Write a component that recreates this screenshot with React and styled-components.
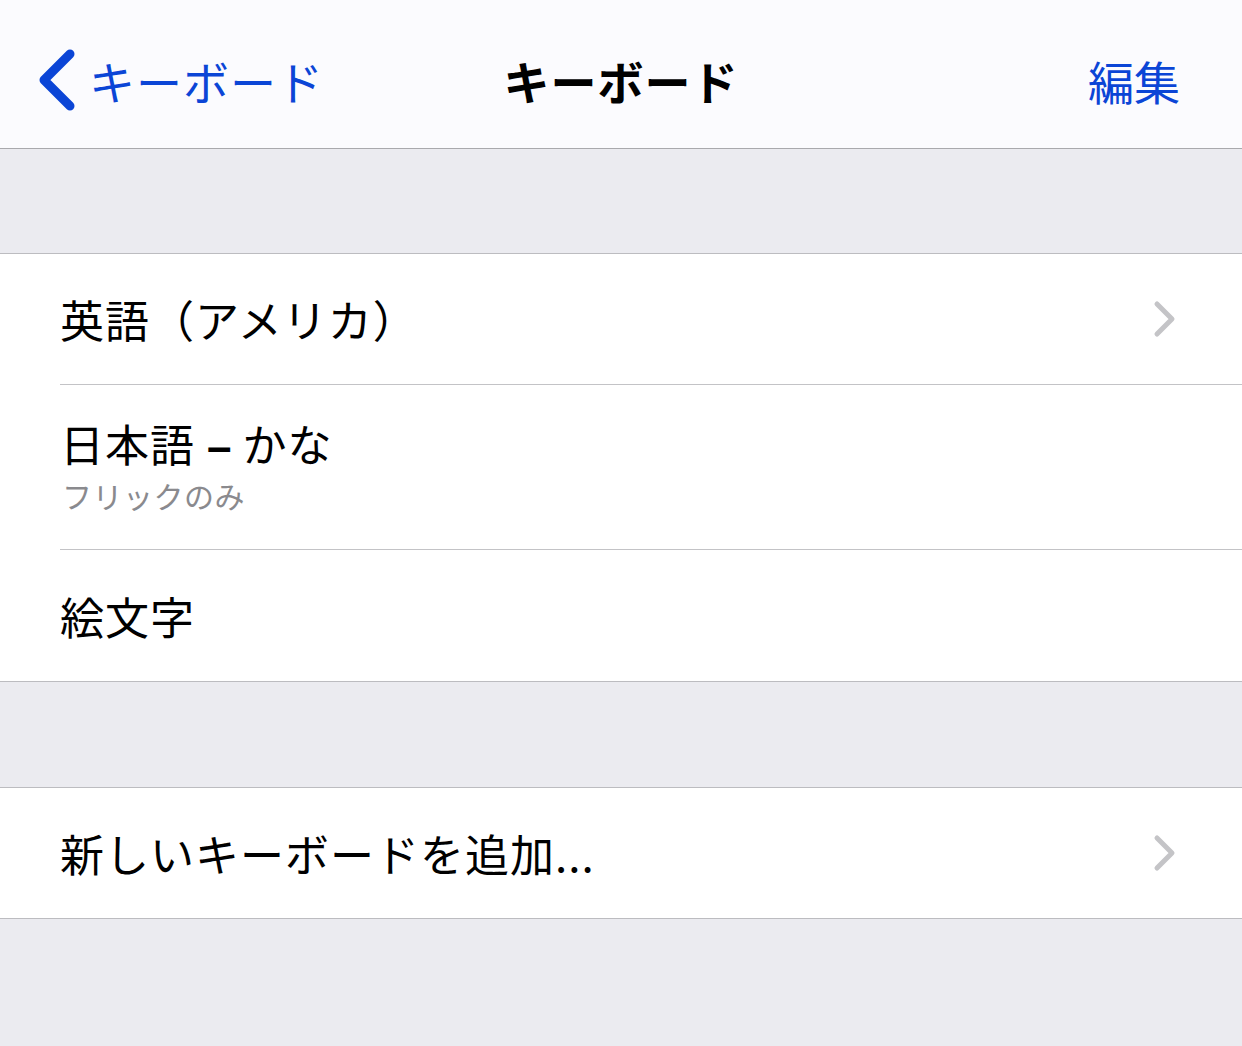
import React from "react";
import styled, { createGlobalStyle } from "styled-components";

const Global = createGlobalStyle`
  html, body { margin: 0; padding: 0; background: #ebebf0; }
  body { font-family: "Noto Sans CJK JP", "Noto Sans", sans-serif; -webkit-font-smoothing: antialiased; }
  #root { min-height: 100vh; }
`;

const Page = styled.div`
  display: flex;
  flex-direction: column;
  width: 1242px;
  min-height: 1046px;
  background: #ebebf0;
`;

const NavBar = styled.div`
  box-sizing: border-box;
  height: 149px;
  background: #fbfbfe;
  border-bottom: 1px solid #a9a9ad;
  display: grid;
  grid-template-columns: 1fr auto 1fr;
  align-items: center;
  padding: 12px 0 0 0;
`;

const BackButton = styled.div`
  display: flex;
  align-items: center;
  gap: 11px;
  margin-left: 36px;
  color: #0b45d6;
  font-size: 46px;
  letter-spacing: 1px;
  line-height: 1;
  justify-self: start;
`;

const Title = styled.div`
  font-size: 46px;
  font-weight: 700;
  letter-spacing: 1px;
  color: #000;
  line-height: 1;
  justify-self: center;
`;

const EditButton = styled.div`
  font-size: 46px;
  color: #0b45d6;
  line-height: 1;
  margin-right: 62px;
  justify-self: end;
`;

const Spacer = styled.div`
  height: ${(p) => p.h}px;
`;

const Group = styled.div`
  background: #fff;
  border-top: 1px solid #bcbcc0;
  border-bottom: 1px solid #bcbcc0;
`;

const Row = styled.div`
  padding-left: 60px;
`;

const RowInner = styled.div`
  display: flex;
  align-items: center;
  justify-content: space-between;
  box-sizing: border-box;
  height: ${(p) => p.h}px;
  padding-right: 64px;
  border-bottom: ${(p) => (p.sep ? "1px solid #c3c3c6" : "none")};
`;

const TextBlock = styled.div`
  display: flex;
  flex-direction: column;
  padding: ${(p) => (p.sub ? "30px 0 34px" : "0")};
`;

const Label = styled.div`
  font-size: 44px;
  height: 52px;
  line-height: 52px;
  letter-spacing: 1px;
  color: #000;
  white-space: nowrap;
`;

const Dash = styled.span`
  display: inline-block;
  font-family: "Liberation Sans", "Noto Sans", sans-serif;
  font-weight: 700;
  line-height: 1;
  margin: 0 10px 0 12px;
`;

const SubLabel = styled.div`
  font-size: 30px;
  line-height: 36px;
  letter-spacing: 0.5px;
  color: #8a8a8e;
  margin-top: 8px;
  margin-left: 2px;
`;

const BackChevron = () => (
  <svg width="42" height="66" viewBox="0 0 42 66">
    <path d="M34 7 L8 33 L34 59" fill="none" stroke="#0b45d6" strokeWidth="9" strokeLinecap="round" strokeLinejoin="round" />
  </svg>
);

const Disclosure = () => (
  <svg width="26" height="40" viewBox="0 0 26 40">
    <path d="M5 5 L20 20 L5 35" fill="none" stroke="#c4c4c7" strokeWidth="5" strokeLinecap="round" strokeLinejoin="round" />
  </svg>
);

export default function App() {
  return (
    <Page>
      <Global />
      <NavBar>
        <BackButton>
          <BackChevron />
          <span>キーボード</span>
        </BackButton>
        <Title>キーボード</Title>
        <EditButton>編集</EditButton>
      </NavBar>
      <Spacer h={104} />
      <Group>
        <Row>
          <RowInner h={131} sep>
            <TextBlock>
              <Label>英語（アメリカ）</Label>
            </TextBlock>
            <Disclosure />
          </RowInner>
        </Row>
        <Row>
          <RowInner h={165} sep>
            <TextBlock sub>
              <Label>
                日本語<Dash>–</Dash>かな
              </Label>
              <SubLabel>フリックのみ</SubLabel>
            </TextBlock>
          </RowInner>
        </Row>
        <Row>
          <RowInner h={131}>
            <TextBlock>
              <Label>絵文字</Label>
            </TextBlock>
          </RowInner>
        </Row>
      </Group>
      <Spacer h={105} />
      <Group>
        <Row>
          <RowInner h={130}>
            <TextBlock>
              <Label>新しいキーボードを追加...</Label>
            </TextBlock>
            <Disclosure />
          </RowInner>
        </Row>
      </Group>
    </Page>
  );
}
